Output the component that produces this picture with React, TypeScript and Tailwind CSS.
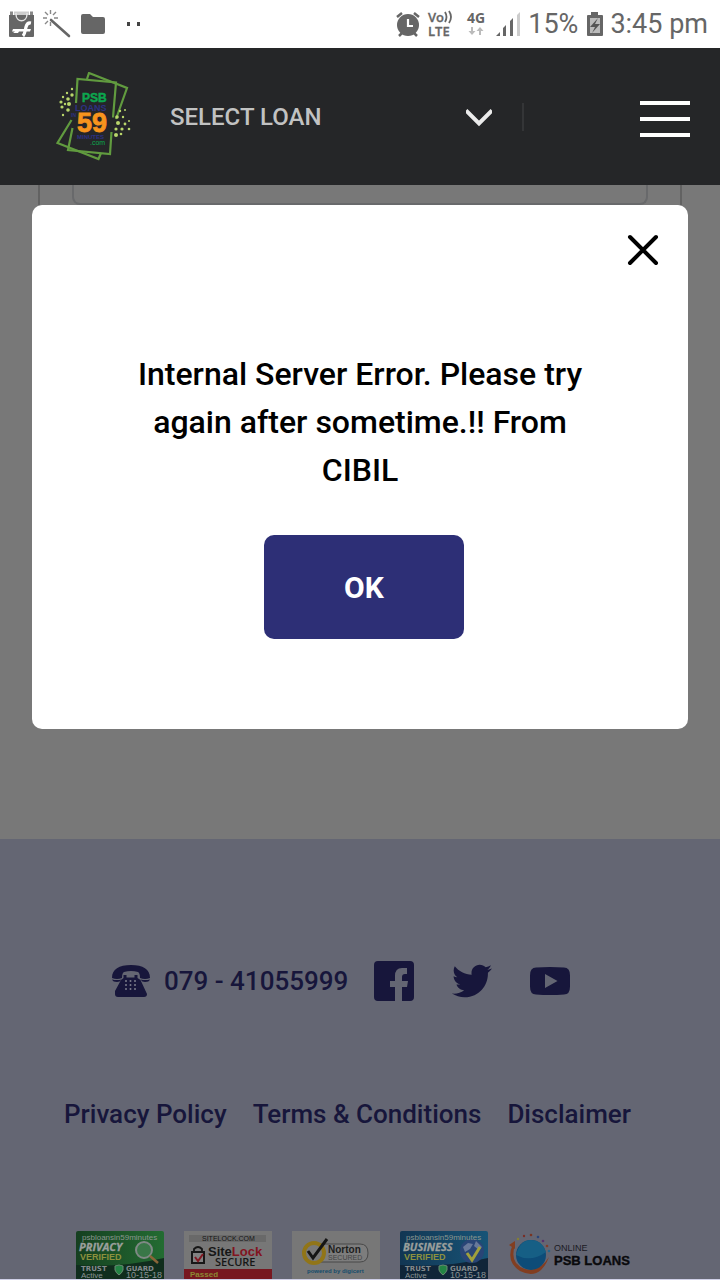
import type { ReactNode } from "react";
import { FaTwitter } from "react-icons/fa";

function StatusBar() {
  return (
    <div className="flex h-12 shrink-0 items-center justify-between bg-white pr-3 pl-2 text-[#666]">
      <div className="flex items-center">
        <svg width="28" height="28" viewBox="0 0 28 28" aria-hidden="true">
          <path d="M1 5h25v21q0 1-1 1H2q-1 0-1-1z" fill="#666" />
          <path d="M2 1.500h3V5H2zM22 1.500h3V5h-3z" fill="#888" />
          <path d="M6 1.500h15V5H6z" fill="#ccc" />
          <path d="M8 3v1c0 9 11 9 11 0V3" fill="none" stroke="#e5e5e5" strokeWidth="1.400" />
          <path d="M15 26c2-2 2-5 3-9 .7-3 2-4.500 5-4" fill="none" stroke="#fff" strokeWidth="3.200" />
          <path d="M5 19h18l-1 2.500H11l-1 1.500H5l2-1.500H4z" fill="#fff" />
        </svg>
        <svg className="ml-1.5" width="30" height="30" viewBox="0 0 30 30" aria-hidden="true">
          <path d="M9 11l18 16" stroke="#666" strokeWidth="2.600" strokeLinecap="round" />
          <path d="M8.500 1v4M8.500 13v4M1 9h4M12 9h4M3 3l3 3M14 3l-3 3M3 15l3-3" stroke="#888" strokeWidth="1.400" />
        </svg>
        <svg className="ml-2" width="26" height="24" viewBox="0 0 26 24" aria-hidden="true">
          <path d="M3 2h7l3 3h10q2 0 2 2v13q0 2-2 2H3q-2 0-2-2V4q0-2 2-2z" fill="#666" />
        </svg>
        <svg className="ml-5" width="18" height="6" viewBox="0 0 18 6" aria-hidden="true">
          <path d="M1 1h3v4H1zM11 1h3v4h-3z" fill="#444" />
        </svg>
      </div>
      <div className="flex items-center font-[Roboto,sans-serif]">
        <svg width="26" height="26" viewBox="0 0 26 26" aria-hidden="true">
          <circle cx="13" cy="14" r="11" fill="#666" />
          <path d="M2 6l5-4M24 6l-5-4M7 22l-3 3M19 22l3 3" stroke="#666" strokeWidth="2.5" />
          <path d="M13 8v7h5" fill="none" stroke="#fff" strokeWidth="2.2" />
        </svg>
        <svg className="ml-1.5 overflow-visible" width="28" height="28" viewBox="0 0 28 28" role="img" aria-label="VoLTE" fontFamily="Open Sans, sans-serif" fontSize="13" fontWeight="600" fill="#666" stroke="#666" strokeWidth=".3">
          <text x="1" y="12">Vo</text>
          <path d="M18 2q3 5 0 10M22 1q4 6 0 12" fill="none" strokeWidth="1.800" />
          <text x="1" y="26">LTE</text>
        </svg>
        <svg className="ml-2 overflow-visible" width="26" height="28" viewBox="0 0 26 28" role="img" aria-label="4G">
          <text x="4" y="13" fontFamily="Open Sans, sans-serif" fontSize="14" fontWeight="700" fill="#666">4G</text>
          <path d="M9 17v5M17 25v-5" stroke="#bbb" strokeWidth="2" />
          <path d="M5.500 21h7L9 25zM13.500 21h7L17 17z" fill="#bbb" />
        </svg>
        <svg className="ml-1.5" width="25" height="26" viewBox="0 0 25 26" aria-hidden="true">
          <path d="M1 25l4-4v4zM8 17l3-3v11H8zM15 10l3-3v18h-3z" fill="#666" />
          <path d="M22 4l3-3v24h-3z" fill="#ccc" />
        </svg>
        <span className="ml-2 text-[27px] leading-8">15%</span>
        <svg className="ml-2" width="18" height="26" viewBox="0 0 18 26" aria-hidden="true">
          <path d="M5 1h7v3h4q1 0 1 1v19q0 1-1 1H2q-1 0-1-1V5q0-1 1-1h3z" fill="#666" />
          <path d="M4 7h10v15H4z" fill="#bbb" />
          <path d="M12 7l-8 9h5l-3 6 8-9H9z" fill="#555" />
        </svg>
        <span className="ml-1.5 text-[27px] leading-8">3:45 pm</span>
      </div>
    </div>
  );
}

const leftDots = [[18, 17, 1.2], [13, 21, 1.2], [18, 23, 1.7], [9, 25, 1.2], [14, 27, 1.8], [7, 30, 1.6], [11, 32, 1.2], [15, 32, 2], [8, 35, 1.6], [14, 38, 1.8], [9, 43, 1.2]];
const rightDots = [[66, 39, 1.2], [71, 38, 1], [63, 45, 1.8], [69, 45, 1.2], [75, 49, 1], [64, 51, 2], [71, 52, 1.4], [62, 57, 1.6], [68, 57, 1.6], [75, 57, 1.3], [62, 63, 2], [67, 62, 1.3]];

function BrandLogo() {
  return (
    <svg width="78" height="90" viewBox="0 0 78 90" role="img" aria-label="PSB Loans in 59 Minutes">
      <g fill="none" stroke="#619b3f" strokeWidth="2.200">
        <path d="M22 31L23.500 7l38.500 3.500-3 35M18.500 56L14 78l42 4 1.500-22" />
        <path d="M33 7l2-6 38 15-11 31M17.500 48L3.500 71l41 16 2.500-6" />
      </g>
      <g fill="#b9d66b">
        {[...leftDots, ...rightDots].map(([x, y, r]) => <circle key={`${x}-${y}`} cx={x} cy={y} r={r} />)}
      </g>
      <g fontFamily="Liberation Sans, sans-serif" fontWeight="700">
        <text x="28" y="30" fontSize="12" fill="#0ca64e" stroke="#0ca64e" strokeWidth=".5">PSB</text>
        <text x="21" y="39" fontSize="9" fill="#2d3183">LOANS</text>
        <text x="17" y="45" fontSize="5" fill="#2d3183">IN</text>
        <text x="23" y="60" fontSize="27" fill="#f7941d" stroke="#f7941d" strokeWidth=".8">59</text>
        <text x="23" y="67" fontSize="6" fill="#2d3183">MINUTES</text>
        <text x="36" y="73" fontSize="7" fontWeight="400" fill="#0ca64e">.com</text>
      </g>
    </svg>
  );
}

function Header() {
  return (
    <header className="flex h-[137px] shrink-0 items-center bg-[#252628] pr-[30px] pl-[54px]">
      <a href="#home" aria-label="Home"><BrandLogo /></a>
      <div className="ml-[38px] flex h-7 flex-1 items-center">
        <label htmlFor="loan" className="sr-only">Select loan</label>
        <div className="grid w-[322px] items-center">
          <select id="loan" className="col-start-1 row-start-1 w-full appearance-none bg-transparent font-[Roboto,sans-serif] text-2xl leading-7 font-medium text-[#c1c2c2]">
            <option>SELECT LOAN</option>
          </select>
          <svg className="pointer-events-none col-start-1 row-start-1 justify-self-end" width="26" height="20" viewBox="0 0 26 20" aria-hidden="true">
            <path d="M0 3.500l13 13 13-13" fill="none" stroke="#ebebeb" strokeWidth="4" />
          </svg>
        </div>
        <div className="ml-[30px] h-7 w-0.5 bg-[#343537]" />
      </div>
      <button type="button" aria-label="Open menu" className="mt-1 flex w-[50px] flex-col gap-3">
        <span className="h-1 bg-white" />
        <span className="h-1 bg-white" />
        <span className="h-1 bg-white" />
      </button>
    </header>
  );
}

function ErrorDialog() {
  return (
    <div role="dialog" aria-modal="true" aria-labelledby="message" className="absolute inset-x-8 top-[205px] flex flex-col items-center rounded-[10px] bg-white pb-[90px]">
      <button type="button" aria-label="Close" className="mt-7 mr-7 self-end">
        <svg width="34" height="34" viewBox="0 0 34 34" aria-hidden="true">
          <path d="M4 4l26 26M30 4L4 30" stroke="#000" strokeWidth="4" strokeLinecap="round" />
        </svg>
      </button>
      <p id="message" className="mt-[83px] max-w-[500px] px-4 text-center text-[32px] leading-[48px] font-medium text-black">
        Internal Server Error. Please try again after sometime.!! From CIBIL
      </p>
      <button type="button" className="mt-[41px] ml-2 h-[104px] w-[200px] rounded-[10px] bg-[#2d2f76] text-[30px] font-bold text-white">OK</button>
    </div>
  );
}

function Badge({ label, width = 88, children }: { label: string; width?: number; children: ReactNode }) {
  return (
    <a href="#verification" aria-label={label}>
      <svg className="overflow-visible" width={width} height="48" viewBox={`0 0 ${width} 48`} fontFamily="Liberation Sans, sans-serif">{children}</svg>
    </a>
  );
}

function GuardBadge({ kind }: { kind: "PRIVACY" | "BUSINESS" }) {
  const green = kind === "PRIVACY";
  return (
    <Badge label={`${kind} verified`}>
      <defs>
        <linearGradient id={kind} x1="0" y1="0" x2="1" y2="0">
          <stop offset="0" stopColor={green ? "#153f20" : "#123653"} />
          <stop offset="1" stopColor={green ? "#236c32" : "#175477"} />
        </linearGradient>
      </defs>
      <rect width="88" height="54" rx="2" fill={`url(#${kind})`} />
      <path d="M0 34q45 3 88-7v21H0z" fill={green ? "#102d1d" : "#102539"} />
      {green ? (
        <g fill="none">
          <circle cx="68" cy="19" r="8" fill="#397748" stroke="#7f8985" strokeWidth="2" />
          <path d="M74 25l8 7" stroke="#8a6538" strokeWidth="2.500" />
        </g>
      ) : (
        <g>
          <circle cx="72" cy="20" r="12" fill="#294576" />
          <path d="M63 16l5-4 5 1-3 5-5 3zM76 10l6 6-3 3-5-4z" fill="#68799a" />
          <path d="M67 22l5 7 8-13" fill="none" stroke="#a0a03c" strokeWidth="3" />
        </g>
      )}
      <text x="6" y="9" fontSize="8" fill="#8a968f">psbloansin59minutes</text>
      <text x="3" y="20" fontSize="11" fontWeight="700" fontStyle="italic" fill="#9a9f9c" stroke="#9a9f9c" strokeWidth=".3" fontFamily="Open Sans, sans-serif">{kind}</text>
      <text x="4" y="29" fontSize="9" fontWeight="700" fill="#8d913e">VERIFIED</text>
      <text x="5" y="40" fontSize="7" fontWeight="700" fontFamily="DejaVu Sans, sans-serif" fill="#848a8d">TRUST</text>
      <path d="M39 35l4-1 4 1v4q-1 3-4 5-3-2-4-5z" fill="#238444" stroke="#698b72" />
      <text x="50" y="40" fontSize="7" fontWeight="700" fontFamily="DejaVu Sans, sans-serif" fill="#848a8d">GUARD</text>
      <text x="5" y="47" fontSize="8" fill="#8b9394">Active</text>
      <text x="50" y="47" fontSize="9" fill="#8b9394">10-15-18</text>
    </Badge>
  );
}

function Badges() {
  return (
    <div className="flex gap-5 pl-3">
      <GuardBadge kind="PRIVACY" />
      <Badge label="SiteLock secure">
        <path d="M0 0h88v48H0z" fill="#777" />
        <path d="M5 4h77v7H5z" fill="#696969" />
        <text x="18" y="10" fontSize="7" fill="#161616">SITELOCK.COM</text>
        <rect x="8" y="21" width="12" height="11" fill="#828282" stroke="#171717" strokeWidth="2" />
        <path d="M10 20v-2q4-4 8 0v2" fill="none" stroke="#171717" strokeWidth="1.800" />
        <path d="M11 26l3 4 5-7" fill="none" stroke="#811721" strokeWidth="2" />
        <text x="24" y="25" fontSize="13" fontWeight="700" fill="#161616">Site<tspan fill="#82141f">Lock</tspan></text>
        <text x="31" y="35" fontSize="11" fontFamily="Open Sans, sans-serif" fontWeight="600" fill="#161616">SECURE</text>
        <path d="M0 38h88v10H0z" fill="#771720" />
        <text x="6" y="46" fontSize="8" fontWeight="700" fill="#8c8733">Passed</text>
      </Badge>
      <Badge label="Norton Secured">
        <path d="M0 0h88v48H0z" fill="#777" />
        <path d="M26 13h42q8 0 8 9t-8 9H26" fill="#7d7d7d" stroke="#494949" />
        <circle cx="22" cy="22" r="10" fill="#797979" stroke="#917518" strokeWidth="4" />
        <path d="M16 20l5 7L35 8" fill="none" stroke="#151515" strokeWidth="3" />
        <text x="36" y="22" fontSize="10" fontWeight="700" fill="#1d1d1d">Norton</text>
        <text x="36" y="29" fontSize="7" fill="#444">SECURED</text>
        <text x="15" y="42" fontSize="6" fontWeight="700" fill="#164c6b">powered by digicert</text>
      </Badge>
      <GuardBadge kind="BUSINESS" />
      <Badge label="Online PSB Loans" width={126}>
        <path d="M5 13q-8 17 7 27 20 10 29-14-9 15-24 12Q1 33 7 14z" fill="#823e21" />
        <path d="M1 14l6-4v8z" fill="#823e21" />
        <circle cx="23" cy="24" r="15" fill="#0d4c78" />
        <path d="M8 24q15 8 30-3-4-12-15-12T8 24z" fill="#165f85" />
        <g>
          <circle cx="10" cy="8" r="1.200" fill="#858033" />
          <circle cx="16" cy="5" r="1.200" fill="#792f25" />
          <circle cx="23" cy="4" r="1.300" fill="#793422" />
          <circle cx="30" cy="6" r="1.300" fill="#28457a" />
          <circle cx="35" cy="10" r="1.300" fill="#56316d" />
          <circle cx="39" cy="15" r="1.300" fill="#813d29" />
          <circle cx="41" cy="20" r="1.300" fill="#28678b" />
        </g>
        <text x="46" y="20" fontSize="9" fill="#1b1b24">ONLINE</text>
        <text x="46" y="34" fontSize="13" fontWeight="700" fill="#0a0a0d" stroke="#0a0a0d" strokeWidth=".4">PSB LOANS</text>
      </Badge>
    </div>
  );
}

function Footer() {
  return (
    <footer className="flex flex-1 flex-col border-b border-[#cfcfe7] bg-[#646673] px-16 pt-[122px] text-[#17163b]">
      <div className="flex h-10 items-center pl-12">
        <a href="tel:07941055999" className="flex items-center gap-3 text-[26px] leading-8 font-medium">
          <svg width="40" height="34" viewBox="0 0 40 34" aria-hidden="true">
            <path d="M0 14C0 5 7 1 19 1s19 4 19 13q-5 2-10 0 0-5-2-6-7-2-14 0-2 1-2 6-5 2-10 0z" fill="#17163b" />
            <path d="M0 15.500q5 1 9.500 0Q8 18 5 18q-4 0-5-2.500zM28.500 15.500q5 1 9.500 0-1 2.500-5 2.500-3 0-4.500-2.500z" fill="#17163b" />
            <path d="M11.500 11h3v2.500h8V11h3v3l3 2 6.500 14q0 3-3 3H6q-3 0-3-3V27l6-11 2.500-2z" fill="#17163b" />
            <g fill="#7b7c8b">
              {[17, 21, 25].flatMap((y) => [14, 18.5, 23].map((x) => <circle key={`${x}-${y}`} cx={x} cy={y} r="1" />))}
            </g>
          </svg>
          079 - 41055999
        </a>
        <div className="ml-[26px] flex items-center gap-[38px]">
          <a href="#facebook" aria-label="Facebook">
            <svg width="40" height="40" viewBox="0 0 40 40" aria-hidden="true">
              <path d="M4 0h32q4 0 4 4v32q0 4-4 4h-8V26h5l1-6h-6v-4q0-3 3-3h2V7h-5q-7 0-7 8v5h-5v6h5v14H4q-4 0-4-4V4q0-4 4-4z" fill="#17163b" />
            </svg>
          </a>
          <a href="#twitter" aria-label="Twitter"><FaTwitter size={40} /></a>
          <a href="#youtube" aria-label="YouTube">
            <svg width="40" height="40" viewBox="0 0 40 40" aria-hidden="true">
              <path d="M6 6.500q14-1 28 0 6 0 6 8v11q0 8-6 8-14 1-28 0-6 0-6-8v-11q0-8 6-8zM15 13v14l12.500-7z" fill="#17163b" fillRule="evenodd" />
            </svg>
          </a>
        </div>
      </div>
      <nav className="mt-[97px] flex gap-[26px] text-[26px] leading-8 font-medium whitespace-nowrap">
        <a href="#privacy">Privacy Policy</a>
        <a href="#terms">Terms &amp; Conditions</a>
        <a href="#disclaimer">Disclaimer</a>
      </nav>
      <div className="mt-[101px] h-12 overflow-hidden"><Badges /></div>
    </footer>
  );
}

export default function App() {
  return (
    <div className="relative flex min-h-screen flex-col font-[Roboto,sans-serif]">
      <StatusBar />
      <Header />
      <main className="h-[654px] shrink-0 bg-[#787878] px-[38px]">
        <div className="h-[440px] border-x-2 border-[#626262] px-8">
          <div className="h-5 rounded-b-lg border-x-2 border-b-2 border-[#68696b]" />
        </div>
      </main>
      <Footer />
      <ErrorDialog />
    </div>
  );
}
